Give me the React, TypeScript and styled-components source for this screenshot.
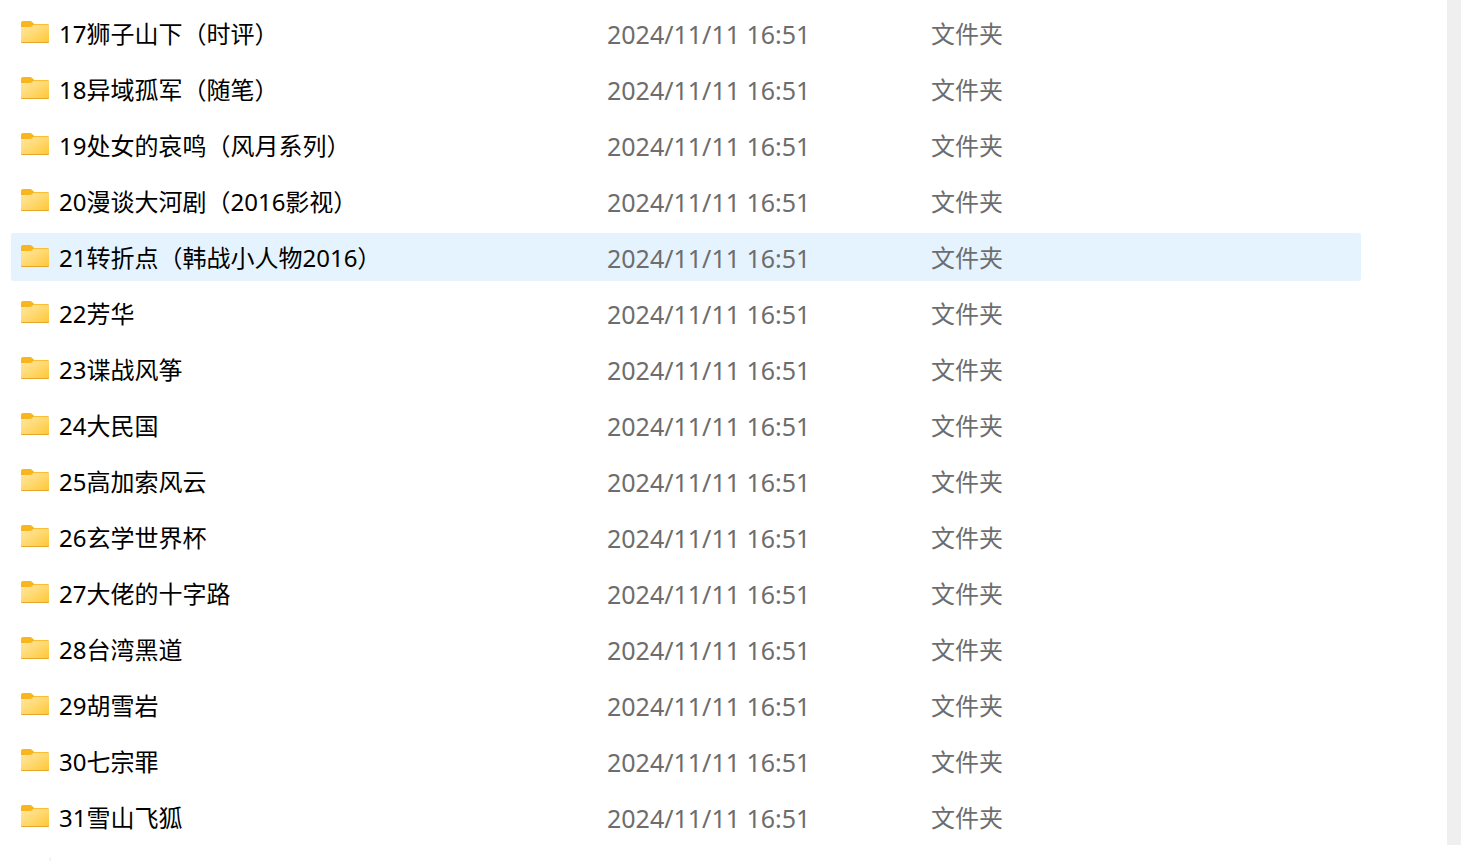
import React from 'react';
import styled, { createGlobalStyle } from 'styled-components';

const GlobalStyle = createGlobalStyle`
  * { box-sizing: border-box; }
  html, body { margin: 0; background: #ffffff; }
  body {
    font-family: "Noto Sans", "Noto Sans CJK SC", sans-serif;
    font-size: 24px;
    line-height: 32px;
    color: #000000;
    overflow: hidden;
  }
`;

const Window = styled.div`
  display: flex;
  flex-direction: column;
  height: 100vh;
  overflow: hidden;
`;

const Body = styled.div`
  display: flex;
  flex: 1;
  min-height: 0;
`;

const FilePane = styled.main`
  flex: 1;
  min-width: 0;
  padding: 1px 86px 0 11px;
`;

const ScrollTrack = styled.div`
  width: 14px;
  flex: none;
  background: #efefef;
`;

const StatusBar = styled.footer`
  flex: none;
  height: 16px;
  padding: 12px 0 0 49px;
`;

const StatusDivider = styled.div`
  width: 2px;
  height: 4px;
  background: #f5f5f5;
`;

const FileTable = styled.table`
  width: 100%;
  table-layout: fixed;
  border-collapse: separate;
  border-spacing: 0 8px;
`;

const NameCol = styled.col`
  width: 596px;
`;

const DateCol = styled.col`
  width: 324px;
`;

const FileRow = styled.tr<{ $hovered: boolean }>`
  height: 48px;
  background: ${({ $hovered }) => ($hovered ? '#e5f3ff' : 'transparent')};
`;

const Cell = styled.td`
  padding: 2px 0 0;
  color: #6d6d6d;
  white-space: nowrap;
  vertical-align: middle;

  &:first-child { border-radius: 2px 0 0 2px; }
  &:last-child { border-radius: 0 2px 2px 0; }
`;

const NameCell = styled(Cell)`
  color: #000000;
`;

const DateCell = styled(Cell)`
  font-size: 25px;
`;

const NameContent = styled.div`
  display: flex;
  align-items: center;
  gap: 10px;
  padding-left: 10px;
`;

const Icon = styled.svg`
  display: block;
  flex: none;
  width: 28px;
  height: 26px;
`;

const FolderIcon = () => (
  <Icon viewBox="0 0 28 26" aria-hidden="true">
    <path d="M0 2a2 2 0 0 1 2-2h7.2c.7 0 1.2.2 1.7.7L13.2 3h13.3A1.5 1.5 0 0 1 28 4.500V12H0z" fill="#f8b51c" />
    <path d="M0 6h9.300c.7 0 1.200-.3 1.700-.7L12.700 3.800h13.800A1.500 1.500 0 0 1 28 5.300v15.200a1.500 1.500 0 0 1-1.500 1.500h-25A1.500 1.500 0 0 1 0 20.500z" fill="url(#folderFront)" />
    <path d="M0 20.200a1.200 1.200 0 0 0 1.200.8h25.600a1.200 1.200 0 0 0 1.200-.8v.3a1.500 1.500 0 0 1-1.500 1.500h-25A1.500 1.500 0 0 1 0 20.500z" fill="#e5a52b" />
  </Icon>
);

const FolderPaint = styled.svg`
  display: block;
  width: 0;
  height: 0;
`;

const folders = [
  '17狮子山下（时评）',
  '18异域孤军（随笔）',
  '19处女的哀鸣（风月系列）',
  '20漫谈大河剧（2016影视）',
  '21转折点（韩战小人物2016）',
  '22芳华',
  '23谍战风筝',
  '24大民国',
  '25高加索风云',
  '26玄学世界杯',
  '27大佬的十字路',
  '28台湾黑道',
  '29胡雪岩',
  '30七宗罪',
  '31雪山飞狐',
];

const hoveredFolder = '21转折点（韩战小人物2016）';

export default function App() {
  return (
    <Window lang="zh-CN">
      <GlobalStyle />
      <FolderPaint aria-hidden="true">
        <defs>
          <linearGradient id="folderFront" x1="0" y1="0" x2="1" y2="1">
            <stop offset="0" stopColor="#ffe8a3" />
            <stop offset="0.5" stopColor="#ffd86f" />
            <stop offset="1" stopColor="#fdc735" />
          </linearGradient>
        </defs>
      </FolderPaint>
      <Body>
        <FilePane>
          <FileTable>
            <colgroup>
              <NameCol />
              <DateCol />
              <col />
            </colgroup>
            <tbody>
              {folders.map((name) => (
                <FileRow key={name} $hovered={name === hoveredFolder}>
                  <NameCell>
                    <NameContent>
                      <FolderIcon />
                      <span>{name}</span>
                    </NameContent>
                  </NameCell>
                  <DateCell>2024/11/11 16:51</DateCell>
                  <Cell>文件夹</Cell>
                </FileRow>
              ))}
            </tbody>
          </FileTable>
        </FilePane>
        <ScrollTrack />
      </Body>
      <StatusBar>
        <StatusDivider />
      </StatusBar>
    </Window>
  );
}
